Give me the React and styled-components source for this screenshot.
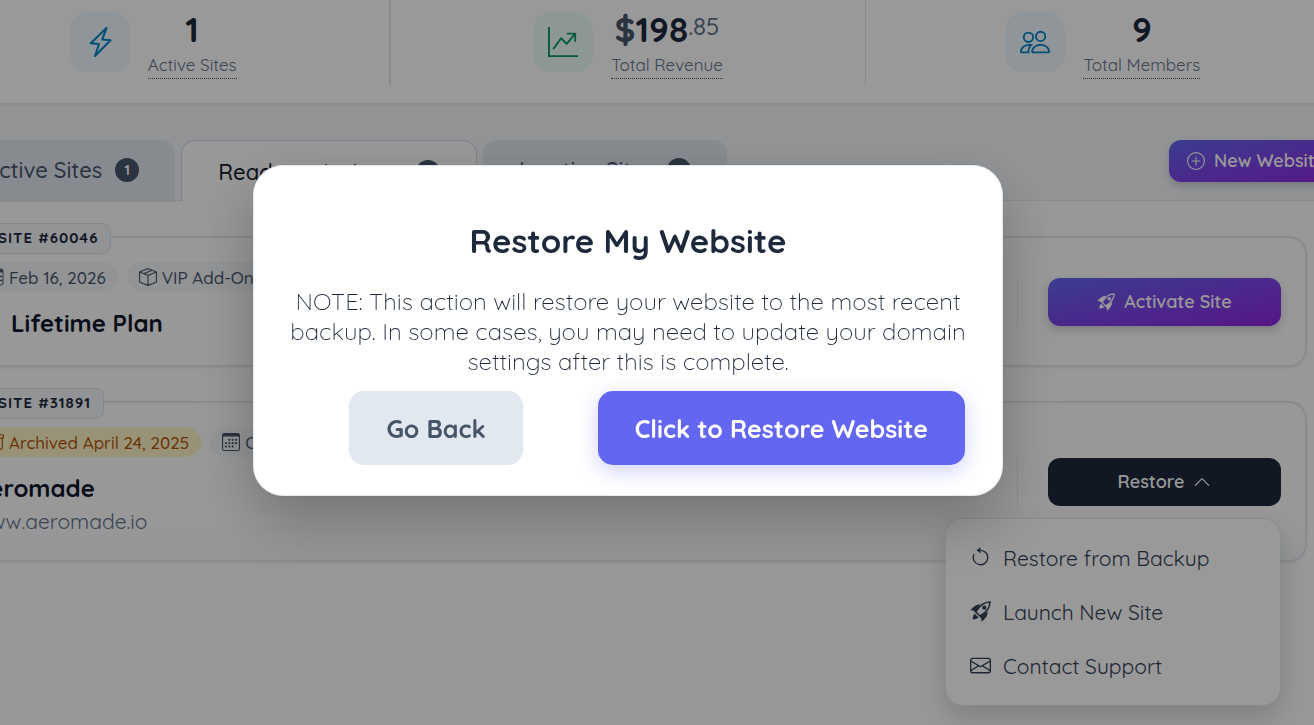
import React from 'react';
import styled, { createGlobalStyle, css } from 'styled-components';
import {
    BsArchive,
    BsArrowCounterclockwise,
    BsBoxSeam,
    BsCalendar3,
    BsChevronUp,
    BsEnvelope,
    BsGraphUpArrow,
    BsPeople,
    BsPlusCircle,
} from 'react-icons/bs';

const GlobalStyle = createGlobalStyle`
    * {
        box-sizing: border-box;
    }
    html, body {
        min-height: 100vh;
    }
    body {
        margin: 0;
        overflow: hidden;
        background-color: #fdfdfe;
        color: #1e293b;
        font-family: Quicksand, Lato, sans-serif;
    }
    h2, h3, p, ul {
        margin: 0;
        padding: 0;
    }
    button {
        border: 0;
        font-family: inherit;
        cursor: pointer;
    }
    svg {
        flex: none;
    }
`;

const Page = styled.div`
    min-height: 100vh;
    margin: 0 -26px 0 -83px;
`;

const Stats = styled.section`
    display: grid;
    grid-template-columns: repeat(3, 1fr);
    padding-bottom: 18px;
    background-color: white;
    border-bottom: 1px solid #e2e8f0;
    box-shadow: 0 1px 4px rgba(0, 0, 0, 0.08);
    position: relative;
`;
const Stat = styled.div`
    display: flex;
    justify-content: center;
    gap: 18px;
    height: 85px;
    padding-top: 12px;
    border-right: ${(props) => props.$line || 0}px solid #e2e8f0;
`;
const StatIcon = styled.div`
    display: flex;
    align-items: center;
    justify-content: center;
    width: 60px;
    height: 60px;
    border-radius: 18px;
    font-size: 30px;
    color: ${(props) => props.$color};
    background-color: ${(props) => props.$bg};
`;
const StatText = styled.div`
    display: flex;
    flex-direction: column;
    align-items: center;
`;
const StatValue = styled.div`
    display: flex;
    height: 42px;
    font-size: 35px;
    font-weight: 700;
    line-height: 34px;
`;
const Currency = styled.span`
    color: #475569;
`;
const Cents = styled.span`
    color: #64748b;
    font-size: 24px;
    font-weight: 500;
    line-height: 28px;
`;
const StatLabel = styled.span`
    padding-bottom: 2px;
    border-bottom: 1px dotted #475569;
    color: #64748b;
    font-size: 17px;
    line-height: 22px;
`;

const TabBar = styled.nav`
    display: flex;
    justify-content: space-between;
    height: 97px;
    padding-top: 36px;
    padding-left: 32px;
    border-bottom: 1px solid #e2e8f0;
    background-color: #f4f6f9;
`;
const TabList = styled.div`
    display: flex;
    gap: 6px;
`;
const Tab = styled.button`
    display: flex;
    align-items: center;
    gap: 13px;
    height: 62px;
    padding: 0 36px 2px;
    border-radius: 14px 14px 0 0;
    background-color: #e2e8f0;
    color: #475569;
    font-size: 22px;
    font-weight: 500;
    white-space: nowrap;
    ${(props) =>
        props.$active &&
        css`
            padding-bottom: 0;
            border: 1px solid #d5dde7;
            border-bottom: 0;
            background-color: #fdfdfe;
            color: #0f172a;
        `}
`;
const Count = styled.span`
    display: flex;
    align-items: center;
    justify-content: center;
    width: 24px;
    height: 24px;
    border-radius: 50%;
    background-color: #475569;
    color: white;
    font-size: 14px;
    font-weight: 700;
`;

const gradient = css`
    background: linear-gradient(to bottom right, #6366f1, #9225e0);
    box-shadow: 0 4px 8px rgba(15, 23, 42, 0.2);
    color: white;
`;
const NewSite = styled.button`
    ${gradient}
    display: flex;
    flex: none;
    align-items: center;
    gap: 9px;
    width: 182px;
    height: 42px;
    margin-right: -11px;
    padding: 0 18px 1px;
    border-radius: 12px;
    font-size: 18px;
    font-weight: 600;
    white-space: nowrap;
`;

const Sites = styled.main`
    display: flex;
    flex-direction: column;
    gap: 34px;
    padding: 35px 33px 0 32px;
`;
const Card = styled.article`
    position: relative;
    display: flex;
    justify-content: space-between;
    min-height: ${(props) => props.$height}px;
    padding: 24px 24px 0 23px;
    border: 2px solid #e2e8f0;
    border-radius: 18px;
    background: linear-gradient(#fdfdfe 75%, ${(props) => props.$tint || '#fdfdfe'});
    box-shadow: 0 1px 3px rgba(0, 0, 0, 0.06);
`;
const SiteId = styled.span`
    position: absolute;
    top: -15px;
    left: 35px;
    padding: 0 12px 2px 11px;
    border: 1px solid #dde3ea;
    border-radius: 8px;
    background-color: #f4f6f9;
    font-size: 15px;
    font-weight: 700;
    letter-spacing: 1px;
    line-height: 27px;
`;
const Chips = styled.div`
    display: flex;
    gap: 9px;
`;
const Chip = styled.span`
    display: flex;
    align-items: center;
    gap: 5px;
    height: 30px;
    padding: 0 12px;
    border-radius: 15px;
    background-color: ${(props) => (props.$warn ? '#fef3c7' : '#f4f6f9')};
    color: ${(props) => (props.$warn ? '#b45309' : '#475569')};
    font-size: 17px;
    font-weight: 500;
    white-space: nowrap;

    svg {
        font-size: 18px;
    }
`;
const SiteName = styled.h3`
    margin-top: 16px;
    padding-left: ${(props) => (props.$indent ? 37 : 0)}px;
    color: #0f172a;
    font-size: 24px;
    font-weight: 700;
    line-height: 30px;
`;
const SiteUrl = styled.a`
    display: block;
    color: #64748b;
    font-size: 21px;
    line-height: 36px;
    text-decoration: none;
`;
const SiteAction = styled.div`
    align-self: flex-start;
    position: relative;
    margin-top: ${(props) => props.$top}px;
    padding-left: 30px;
    border-left: 1px solid #e2e8f0;
`;
const ActionButton = styled.button`
    ${gradient}
    display: flex;
    align-items: center;
    justify-content: center;
    gap: 9px;
    width: 233px;
    height: 48px;
    padding-bottom: 2px;
    border-radius: 12px;
    font-size: 18px;
    font-weight: 600;
    ${(props) =>
        props.$dark &&
        css`
            background: #1e293b;
            box-shadow: none;
        `}
`;

const Menu = styled.ul`
    position: absolute;
    top: 60px;
    right: 0;
    width: 336px;
    padding: 12px;
    border: 1px solid #e2e8f0;
    border-radius: 18px;
    background-color: white;
    box-shadow: 0 12px 28px rgba(0, 0, 0, 0.16);
    list-style: none;
`;
const MenuItem = styled.button`
    display: flex;
    align-items: center;
    gap: 12px;
    width: 100%;
    height: 54px;
    padding: 0 12px;
    background: none;
    color: #334155;
    font-size: 21px;

    svg {
        margin-bottom: 2px;
    }
`;

const Overlay = styled.div`
    position: fixed;
    inset: 0 -25px 0 -83px;
    display: flex;
    align-items: flex-start;
    justify-content: center;
    padding-top: 165px;
    background-color: rgba(0, 0, 0, 0.4);
`;
const Modal = styled.div`
    width: 750px;
    padding: 53px 30px 30px;
    border: 1px solid #e2e8f0;
    border-radius: 30px;
    background-color: white;
    box-shadow: 0 24px 60px rgba(0, 0, 0, 0.25);
    text-align: center;
`;
const ModalTitle = styled.h2`
    font-size: 33px;
    font-weight: 700;
    line-height: 44px;
`;
const ModalText = styled.p`
    margin-top: 23px;
    font-size: 24px;
    font-weight: 300;
    line-height: 30px;
`;
const ModalActions = styled.div`
    display: flex;
    justify-content: flex-end;
    gap: 75px;
    margin-top: 15px;
    padding-right: 7px;
`;
const ModalButton = styled.button`
    height: 74px;
    padding: 0 37px;
    border-radius: 15px;
    background-color: ${(props) => (props.$primary ? '#6366f1' : '#e2e8f0')};
    box-shadow: ${(props) => (props.$primary ? '0 6px 20px rgba(99, 102, 241, 0.3)' : 'none')};
    color: ${(props) => (props.$primary ? 'white' : '#475569')};
    font-size: 25px;
    font-weight: 700;
`;

const Bolt = () => (
    <svg width="1em" height="1em" viewBox="0 0 30 30" fill="none" stroke="currentColor" strokeWidth="2">
        <path d="M21.5 1 5.8 16.3 14 17 10 29 25.5 13.3 17.2 12.6Z" strokeLinejoin="round" />
    </svg>
);
const Rocket = () => (
    <svg width="1em" height="1em" viewBox="0 0 21 21" fill="currentColor">
        <path d="M20 1C14 1 10 3.5 6 11L10 15C17 11 20 7 20 1Z" fill="none" stroke="currentColor" strokeWidth="1.5" />
        <circle cx="14.3" cy="6.7" r="2.1" />
        <path d="M10.5 3.2C6 3.4 3.5 5.5 0 9.5 2 9 3.5 9.5 5.4 11.4Z" />
        <path d="M17.8 10.5C17.5 15 15.5 17.5 11.5 21 12 19 11.5 17.5 9.6 15.6Z" />
        <path d="M4.6 12.4C3 14 3 16 2.6 18.4 5 18 7.2 17.8 8.6 16.4Z" />
    </svg>
);
const PlanCalendar = () => (
    <svg width="1em" height="1em" viewBox="0 0 18 18" fill="none" stroke="currentColor">
        <rect x="1" y="1" width="16" height="16" rx="2" />
        <path d="M1 3h16" strokeWidth="3" />
        <path d="M3 8.5h5M3 12.5h5M11 8.5h5M11 12.5h5" strokeWidth="1.5" />
    </svg>
);

function App() {
    return (
        <>
            <GlobalStyle />
            <Page>
                <Stats>
                    <Stat $line={2}>
                        <StatIcon $color="#0284c7" $bg="#f0f9ff">
                            <Bolt />
                        </StatIcon>
                        <StatText>
                            <StatValue>1</StatValue>
                            <StatLabel>Active Sites</StatLabel>
                        </StatText>
                    </Stat>
                    <Stat $line={1}>
                        <StatIcon $color="#059669" $bg="#ecfdf5">
                            <BsGraphUpArrow />
                        </StatIcon>
                        <StatText>
                            <StatValue>
                                <Currency>$</Currency>198<Cents>.85</Cents>
                            </StatValue>
                            <StatLabel>Total Revenue</StatLabel>
                        </StatText>
                    </Stat>
                    <Stat>
                        <StatIcon $color="#0284c7" $bg="#f0f9ff">
                            <BsPeople />
                        </StatIcon>
                        <StatText>
                            <StatValue>9</StatValue>
                            <StatLabel>Total Members</StatLabel>
                        </StatText>
                    </Stat>
                </Stats>
                <TabBar>
                    <TabList>
                        <Tab>
                            Active Sites <Count>1</Count>
                        </Tab>
                        <Tab $active>
                            Ready to Activate <Count>1</Count>
                        </Tab>
                        <Tab>
                            Inactive Sites <Count>1</Count>
                        </Tab>
                    </TabList>
                    <NewSite>
                        <BsPlusCircle /> New Website
                    </NewSite>
                </TabBar>
                <Sites>
                    <Card $height={131}>
                        <SiteId>SITE #60046</SiteId>
                        <div>
                            <Chips>
                                <Chip>
                                    <PlanCalendar /> Feb 16, 2026
                                </Chip>
                                <Chip>
                                    <BsBoxSeam /> VIP Add-Ons
                                </Chip>
                            </Chips>
                            <SiteName $indent>Lifetime Plan</SiteName>
                        </div>
                        <SiteAction $top={16}>
                            <ActionButton>
                                <Rocket /> Activate Site
                            </ActionButton>
                        </SiteAction>
                    </Card>
                    <Card $height={161} $tint="#f7f9fa">
                        <SiteId>SITE #31891</SiteId>
                        <div>
                            <Chips>
                                <Chip $warn>
                                    <BsArchive /> Archived April 24, 2025
                                </Chip>
                                <Chip>
                                    <BsCalendar3 /> October 12, 2024
                                </Chip>
                            </Chips>
                            <SiteName>Aeromade</SiteName>
                            <SiteUrl href="#">www.aeromade.io</SiteUrl>
                        </div>
                        <SiteAction $top={31}>
                            <ActionButton $dark>
                                Restore <BsChevronUp />
                            </ActionButton>
                            <Menu>
                                <li>
                                    <MenuItem>
                                        <BsArrowCounterclockwise /> Restore from Backup
                                    </MenuItem>
                                </li>
                                <li>
                                    <MenuItem>
                                        <Rocket /> Launch New Site
                                    </MenuItem>
                                </li>
                                <li>
                                    <MenuItem>
                                        <BsEnvelope /> Contact Support
                                    </MenuItem>
                                </li>
                            </Menu>
                        </SiteAction>
                    </Card>
                </Sites>
            </Page>
            <Overlay>
                <Modal role="dialog" aria-modal="true" aria-labelledby="restore-title">
                    <ModalTitle id="restore-title">Restore My Website</ModalTitle>
                    <ModalText>
                        NOTE: This action will restore your website to the most recent backup. In some cases, you may
                        need to update your domain settings after this is complete.
                    </ModalText>
                    <ModalActions>
                        <ModalButton>Go Back</ModalButton>
                        <ModalButton $primary>Click to Restore Website</ModalButton>
                    </ModalActions>
                </Modal>
            </Overlay>
        </>
    );
}

export default App;
